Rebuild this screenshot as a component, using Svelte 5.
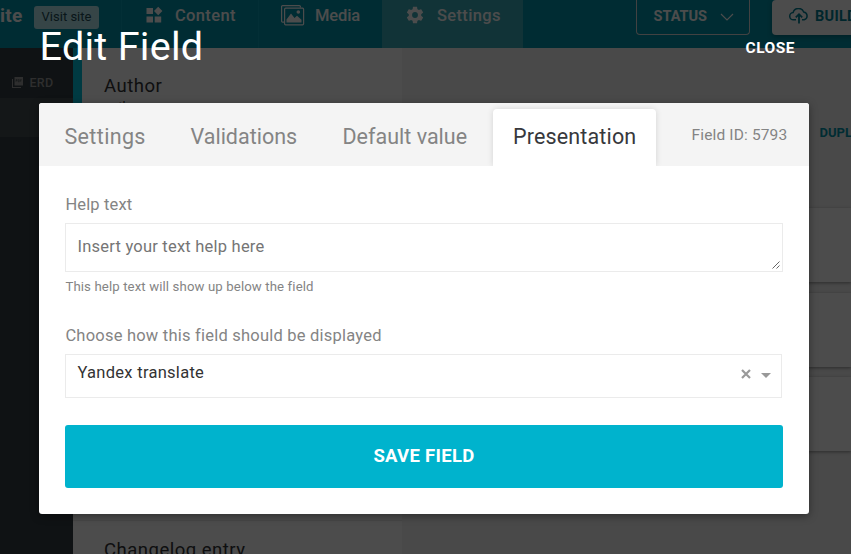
<script>
  const tabs = ['Settings', 'Validations', 'Default value', 'Presentation'];
  let active = $state('Presentation');
  let display = $state('Yandex translate');
</script>

<div class="page">
  <header class="topbar">
    <div class="site"><b>ite</b><span class="visit">Visit site</span></div>
    <nav>
      <div class="nav content">
        <svg width="17" height="17" viewBox="0 0 17 17" fill="currentColor"><path d="M.5 0h6.500v6H.5zM.5 8.500h6.500v6H.5zM8.700 8.500h6.500v6H8.700zM12.200-1.200l4.200 4.200-4.200 4.200L8 3z" /></svg>
        <span>Content</span>
      </div>
      <div class="nav media">
        <svg width="24" height="21" viewBox="0 0 24 21" fill="none" stroke="currentColor" stroke-width="1.2"><path d="M3 17.2H1.6a1 1 0 0 1-1-1V1.6a1 1 0 0 1 1-1h16.8a1 1 0 0 1 1 1V2.6" /><rect x="3.6" y="3.2" width="19" height="16.6" rx="1" /><path d="M5.5 17.5v-3L10 8.5l3.5 4.5 2.5-2.2 4.5 4v2.7z" fill="currentColor" stroke="none" /><circle cx="17.3" cy="7" r="1.8" fill="currentColor" stroke="none" /></svg>
        <span>Media</span>
      </div>
      <div class="nav settings">
        <svg width="20" height="20" viewBox="0 0 24 24" fill="currentColor"><path d="M19.43 12.98c.04-.32.07-.64.07-.98s-.03-.66-.07-.98l2.11-1.65c.19-.15.24-.42.12-.64l-2-3.46c-.12-.22-.39-.3-.61-.22l-2.49 1c-.52-.4-1.08-.73-1.69-.98l-.38-2.65C14.46 2.18 14.25 2 14 2h-4c-.25 0-.46.18-.49.42l-.38 2.65c-.61.25-1.17.59-1.69.98l-2.49-1c-.23-.09-.49 0-.61.22l-2 3.46c-.13.22-.07.49.12.64l2.11 1.65c-.04.32-.07.65-.07.98s.03.66.07.98l-2.11 1.65c-.19.15-.24.42-.12.64l2 3.46c.12.22.39.3.61.22l2.49-1c.52.4 1.08.73 1.69.98l.38 2.65c.03.24.24.42.49.42h4c.25 0 .46-.18.49-.42l.38-2.65c.61-.25 1.17-.59 1.69-.98l2.49 1c.23.09.49 0 .61-.22l2-3.46c.12-.22.07-.49-.12-.64l-2.11-1.65zM12 15.5a3.5 3.5 0 1 1 0-7 3.5 3.5 0 0 1 0 7z" /></svg>
        <span>Settings</span>
      </div>
    </nav>
    <div class="actions">
      <div class="status"><span>STATUS</span><svg width="14" height="8" viewBox="0 0 14 8" fill="none" stroke="currentColor" stroke-width="1.1"><path d="M1 1l6 6 6-6" /></svg></div>
      <div class="build"><svg width="20" height="16" viewBox="0 0 20 16" fill="none" stroke="currentColor" stroke-width="1.5"><path d="M7 11.8H4.6a3.6 3.6 0 0 1-.5-7.2A5.6 5.6 0 0 1 14.7 4a4 4 0 0 1 .5 7.8H13" /><path d="M10 15.5V6.5M6.8 9.4L10 6.2l3.2 3.2" stroke-width="1.8" /></svg><span>BUILD</span></div>
    </div>
  </header>
  <div class="workspace">
    <aside>
      <div class="erd"><svg width="11" height="11" viewBox="0 0 11 11" fill="currentColor"><path d="M2.5 0H11v8.5H2.5zM0 2h1v8h8v1H0z" /><path d="M4 4.8V2.6h1.1v1H4M6.2 4.8V2.6h1v2.2zM8.4 4.8V2.6h1.3M8.4 3.7h1" stroke="#323f43" stroke-width=".5" fill="none" /></svg><span>ERD</span></div>
      <div class="row"></div>
    </aside>
    <section class="list">
      <div class="model current"><h2>Author</h2><small>author</small></div>
      <div class="model filler"></div>
      <div class="model last"><h2>Changelog entry</h2></div>
    </section>
    <section class="detail">
      <div class="dup">DUPLICATE</div>
      <div class="card"></div>
      <div class="card"></div>
      <div class="card"></div>
    </section>
  </div>
</div>

<div class="overlay">
  <div class="heading"><h1>Edit Field</h1><button class="close">CLOSE</button></div>
  <div class="modal">
    <div class="tabs">
      {#each tabs as tab, i}
        <button class="tab t{i}" class:active={tab === active} onclick={() => (active = tab)}><span>{tab}</span></button>
      {/each}
      <span class="fid">Field ID: 5793</span>
    </div>
    <div class="body">
      <label for="help">Help text</label>
      <div class="area">
        <textarea id="help" placeholder="Insert your text help here"></textarea>
        <svg class="grip" width="8" height="8" viewBox="0 0 8 8" stroke="#555" fill="none" stroke-width=".9"><path d="M.5 7.5l7-7M4.5 7.5l3-3" /></svg>
      </div>
      <p class="hint">This help text will show up below the field</p>
      <div class="label2">Choose how this field should be displayed</div>
      <div class="select">
        <span>{display}</span>
        <svg class="x" width="10" height="10" viewBox="0 0 10 10" stroke="#999" stroke-width="2.2" fill="none"><path d="M1 1l8 8M9 1L1 9" /></svg>
        <i class="caret"></i>
      </div>
      <button class="save"><span>SAVE FIELD</span></button>
    </div>
  </div>
</div>

<style>
  :global(body) { margin: 0; overflow: hidden; }
  .page, .overlay, .page *, .overlay * { box-sizing: border-box; }
  .page { width: 851px; height: 554px; overflow: hidden; background: #f3f3f3; font-family: Roboto, "Liberation Sans", sans-serif; color: #323437; display: flex; flex-direction: column; }
  h1, h2, p { margin: 0; font-weight: 400; }
  button { border: 0; background: none; padding: 0; font-family: inherit; text-align: left; }
  svg { flex: none; display: block; }
  span { white-space: nowrap; }
  .topbar { height: 48px; flex: none; display: flex; background: #0093aa; color: #fff; }
  .site { width: 121px; flex: none; display: flex; align-items: flex-start; }
  .site b { font-size: 19px; line-height: 21px; width: 34px; padding-top: 5px; letter-spacing: .3px; }
  .visit { width: 65px; height: 23px; margin-top: 6px; border-radius: 3px; background: #b5e7ee; color: #1e4d57; font-size: 13px; line-height: 22px; text-align: center; }
  nav { display: flex; flex: none; }
  .nav { flex: none; display: flex; align-items: flex-start; border-left: 1px solid #0a9fb5; font-size: 16.5px; line-height: 20px; font-weight: 500; }
  .nav span { padding-top: 6px; letter-spacing: .35px; }
  .content { width: 137px; padding-left: 24px; }
  .content svg { margin: 8px 12px 0 0; overflow: visible; }
  .media { width: 124px; padding-left: 22px; }
  .media svg { margin: 5px 10px 0 0; }
  .media span { letter-spacing: -.1px; }
  .settings { width: 141px; background: #39aab7; border-left: 0; padding-left: 23px; }
  .settings svg { margin: 5px 12px 0 0; }
  .actions { display: flex; margin-left: 113px; width: 215px; flex: none; font-weight: 700; }
  .status { width: 114px; height: 35px; flex: none; border: 1px solid #ddd; border-top: 0; border-radius: 0 0 4px 4px; display: flex; padding-left: 16.5px; }
  .status span { font-size: 14.5px; line-height: 34px; width: 66px; }
  .status svg { margin-top: 13px; }
  .build { width: 110px; height: 35px; flex: none; margin-left: 22px; border-radius: 4px; background: #fff; color: #007f94; display: flex; padding-left: 17px; box-shadow: 0 2px 5px #0004; }
  .build svg { margin: 8px 6px 0 0; }
  .build span { font-size: 14.5px; line-height: 34px; letter-spacing: .3px; }
  .workspace { flex: 1; display: flex; min-height: 0; }
  aside { width: 73px; flex: none; background: #323f43; color: #999; padding-top: 26px; }
  .erd { display: flex; gap: 6.5px; padding-left: 12px; font-size: 12.5px; font-weight: 500; line-height: 18px; height: 24px; }
  .erd span { letter-spacing: .3px; }
  .erd svg { margin-top: 3px; }
  .row { height: 39px; background: #454f52; }
  .list { width: 329px; flex: none; background: #fdfdfd; }
  .model { border-bottom: 1px solid #eee; }
  .current { height: 85px; border-left: 9px solid #00c4dc; padding: 27px 0 0 22px; }
  .filler { height: 388px; }
  .model h2 { font-size: 18.5px; line-height: 22px; letter-spacing: .5px; }
  .model small { display: block; font-size: 13px; line-height: 16px; margin-top: 2px; }
  .last { height: 85px; padding: 18px 0 0 31px; }
  .detail { flex: 1; min-width: 0; padding-top: 75px; }
  .dup { height: 85px; padding-left: 417.5px; color: #0093aa; font-size: 13px; font-weight: 700; line-height: 20px; white-space: nowrap; overflow: hidden; }
  .card { height: 74px; margin-bottom: 10.5px; background: #fdfdfd; box-shadow: 0 1px 3px #0006; }

  .overlay { position: absolute; inset: 0; width: 851px; height: 554px; padding: 0 42px 0 39px; background: rgba(0, 0, 0, .7); font-family: Roboto, "Liberation Sans", sans-serif; }
  .heading { height: 103px; display: flex; justify-content: space-between; align-items: flex-start; color: #fff; }
  h1 { font-size: 39.5px; line-height: 48px; padding: 23px 0 0 .5px; letter-spacing: .3px; }
  .close { color: #fff; font-size: 15.5px; line-height: 20px; font-weight: 700; letter-spacing: .5px; margin: 38px 14px 0 0; }
  .modal { height: 411px; background: #fff; border-radius: 3px; box-shadow: 0 2px 8px #0006; overflow: hidden; }
  .tabs { height: 63px; background: #f4f4f4; display: flex; align-items: flex-end; overflow: hidden; }
  .tab { height: 57px; color: #848484; font-size: 21.5px; line-height: 56px; flex: none; }
  .tab span { display: block; height: 57px; }
  .t0 { width: 126px; padding-left: 25.5px; letter-spacing: .35px; }
  .t1 { width: 152px; padding-left: 25.5px; }
  .t2 { width: 176px; padding-left: 25.5px; }
  .t3 { width: 163px; padding-left: 20px; letter-spacing: .15px; }
  .active { color: #37383c; background: #fff; border-radius: 4px 4px 0 0; box-shadow: 0 0 6px #0002; }
  .fid { color: #848484; font-size: 15.5px; line-height: 52px; height: 57px; margin-left: 35.5px; letter-spacing: .15px; }
  .body { padding: 26px 26px 0; color: #848484; }
  label, .label2 { display: block; font-size: 16.5px; line-height: 25px; height: 31px; letter-spacing: .14px; padding-left: .4px; }
  .area { position: relative; height: 49px; }
  textarea { display: block; width: 718px; height: 49px; border: 1px solid #ebebeb; outline: 0; resize: none; padding: 10px 11.5px; font: 16.5px/26px Roboto, sans-serif; letter-spacing: .22px; overflow: hidden; }
  textarea::placeholder { color: #757575; opacity: 1; }
  .grip { position: absolute; right: 3px; bottom: 3px; }
  .hint { font-size: 13.2px; line-height: 20px; height: 52px; padding: 5px 0 0 .4px; letter-spacing: .12px; }
  .label2 { height: 30px; line-height: 24px; letter-spacing: .22px; }
  .select { width: 717px; height: 44px; border: 1px solid #ebebeb; color: #333; display: flex; padding: 0 10px 0 11.5px; font-size: 16.5px; line-height: 35px; letter-spacing: .28px; }
  .select span { flex: 1; }
  .x { margin: 14px 10.5px 0 0; }
  .caret { width: 0; height: 0; margin-top: 18px; border: 5.5px solid transparent; border-top-color: #999; border-bottom: 0; }
  .save { width: 718px; height: 63px; margin-top: 27px; padding-bottom: 2px; background: #00b3cd; color: #fff; border-radius: 3px; text-align: center; font-size: 18.5px; font-weight: 700; letter-spacing: .3px; line-height: 60px; display: block; }
</style>
